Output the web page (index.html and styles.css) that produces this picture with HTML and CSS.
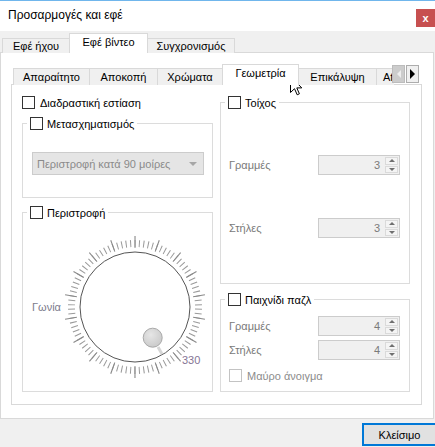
FILE: index.html
```html
<!DOCTYPE html>
<html>
<head>
<meta charset="utf-8">
<link rel="stylesheet" href="styles.css">
</head>
<body>
<div class="window">
  <div class="titlebar">
    <span class="title">Προσαρμογές και εφέ</span>
    <span class="close">x</span>
  </div>
  <div class="client">
    <div class="otabs">
      <div class="otab t1">Εφέ ήχου</div>
      <div class="otab t2 sel">Εφέ βίντεο</div>
      <div class="otab t3">Συγχρονισμός</div>
    </div>
    <div class="opane">
      <div class="itabs">
        <div class="itab w1">Απαραίτητο</div>
        <div class="itab w2">Αποκοπή</div>
        <div class="itab w3">Χρώματα</div>
        <div class="itab w4 sel">Γεωμετρία</div>
        <div class="itab w5">Επικάλυψη</div>
        <div class="itab w6">AtmoLight</div>
      </div>
      <div class="scrollbtns">
        <span class="sb sb-left"><span class="tri-l"></span></span>
        <span class="sb sb-right"><span class="tri-r"></span></span>
      </div>
      <div class="ipane">
        <div class="col lcol">
          <div class="crow"><span class="box"></span><span>Διαδραστική εστίαση</span></div>
          <fieldset class="group g-transform">
            <legend><span class="box"></span><span>Μετασχηματισμός</span></legend>
            <div class="combo"><span>Περιστροφή κατά 90 μοίρες</span><span class="caret"></span></div>
          </fieldset>
          <fieldset class="group g-rotate">
            <legend><span class="box"></span><span>Περιστροφή</span></legend>
            <div class="dialrow">
              <span class="dlabel">Γωνία</span>
              <svg class="dial" width="145" height="150" viewBox="0 0 145 150">
                <circle cx="74" cy="75" r="63.5" fill="none" stroke="#9a9a9a" stroke-width="7" pathLength="360" stroke-dasharray="0.9 3.1" stroke-dashoffset="0.45" transform="rotate(2 74 75)"/>
                <circle cx="74" cy="75" r="65" fill="none" stroke="#8a8a8a" stroke-width="12" pathLength="360" stroke-dasharray="0.9 19.1" stroke-dashoffset="0.45" transform="rotate(10 74 75)"/>
                <circle cx="74" cy="75" r="55" fill="#fff" stroke="#555" stroke-width="1"/>
                <line x1="97" y1="115" x2="101" y2="122" stroke="#d6d6d6" stroke-width="3"/>
                <defs>
                  <radialGradient id="kg" cx="0.4" cy="0.35" r="0.7">
                    <stop offset="0" stop-color="#e6e6e6"/>
                    <stop offset="1" stop-color="#c9c9c9"/>
                  </radialGradient>
                </defs>
                <circle cx="91.7" cy="105.7" r="9.5" fill="url(#kg)" stroke="#a9a9a9" stroke-width="1"/>
                <text x="121" y="132" class="dval">330</text>
              </svg>
            </div>
          </fieldset>
        </div>
        <div class="col rcol">
          <fieldset class="group g-wall">
            <legend><span class="box"></span><span>Τοίχος</span></legend>
            <div class="srow r1"><span class="lbl">Γραμμές</span><div class="spin"><span class="val">3</span><span class="btns"><span class="up"><i></i></span><span class="dn"><i></i></span></span></div></div>
            <div class="srow r2"><span class="lbl">Στήλες</span><div class="spin"><span class="val">3</span><span class="btns"><span class="up"><i></i></span><span class="dn"><i></i></span></span></div></div>
          </fieldset>
          <fieldset class="group g-puzzle">
            <legend><span class="box"></span><span>Παιχνίδι παζλ</span></legend>
            <div class="srow p1"><span class="lbl">Γραμμές</span><div class="spin"><span class="val">4</span><span class="btns"><span class="up"><i></i></span><span class="dn"><i></i></span></span></div></div>
            <div class="srow p2"><span class="lbl">Στήλες</span><div class="spin"><span class="val">4</span><span class="btns"><span class="up"><i></i></span><span class="dn"><i></i></span></span></div></div>
            <div class="crow dis"><span class="box"></span><span>Μαύρο άνοιγμα</span></div>
          </fieldset>
        </div>
      </div>
    </div>
    <div class="footer"><span class="btn">Κλείσιμο</span></div>
  </div>
</div>
<svg class="cursor" width="13" height="20" viewBox="0 0 13 20"><path d="M0.5 0.5 V16.5 L4.5 12.7 L7.2 18.8 L9.4 17.8 L6.8 11.9 H11.8 Z" fill="#fff" stroke="#000" stroke-width="1" stroke-linejoin="miter"/></svg>
</body>
</html>
```

FILE: styles.css
```css
* { box-sizing: border-box; }
html, body { margin: 0; padding: 0; }
body {
  width: 435px; height: 447px; overflow: hidden; position: relative;
  background: #f0f0f0;
  font-family: "Liberation Sans", Arial, sans-serif;
  font-size: 11px; color: #000;
}
.window { height: 447px; border-top: 1px solid #70b6ec; display: flex; flex-direction: column; }
.titlebar { height: 30px; background: #fff; display: flex; justify-content: space-between; align-items: flex-start; flex-shrink: 0; }
.title { padding-left: 8px; line-height: 28px; font-size: 12px; }
.close { margin-top: 8px; width: 19px; height: 18px; background: #c75050; color: #fff; font-weight: bold; font-size: 11px; display: flex; align-items: center; justify-content: center; line-height: 1; }

.client { flex: 1; padding-top: 2px; }
.otabs { display: flex; align-items: flex-end; height: 20px; margin-left: 2px; margin-bottom: -1px; position: relative; z-index: 2; }
.otab { height: 15px; border: 1px solid #d9d9d9; border-bottom: none; background: #f0f0f0; display: flex; align-items: center; justify-content: center; line-height: 1; }
.otab + .otab { margin-left: -1px; }
.otab.t1 { width: 68px; }
.otab.t2 { width: 79px; }
.otab.t3 { width: 88px; }
.otab.sel { height: 20px; background: #fff; position: relative; z-index: 1; padding-bottom: 2px; }

.opane { position: relative; width: 434px; height: 367px; border: 1px solid #d9d9d9; background: #fff; padding: 11px 0 0 10px; }
.itabs { display: flex; align-items: flex-end; height: 21px; width: 381px; margin-left: 2px; margin-bottom: -1px; overflow: hidden; position: relative; z-index: 2; }
.itab { flex-shrink: 0; height: 17px; border: 1px solid #d9d9d9; border-bottom: none; background: #f0f0f0; display: flex; align-items: center; justify-content: center; line-height: 1; }
.itab + .itab { margin-left: -1px; }
.itab.w1 { width: 77px; }
.itab.w2 { width: 69px; }
.itab.w3 { width: 66px; }
.itab.w4 { width: 77px; }
.itab.w5 { width: 79px; }
.itab.w6 { width: 80px; justify-content: flex-start; padding-left: 6px; }
.itab.sel { height: 21px; background: #fff; position: relative; z-index: 1; padding-bottom: 3px; }

.scrollbtns { position: absolute; left: 391px; top: 12px; display: flex; z-index: 3; }
.sb { width: 13px; height: 18px; border: 1px solid #bcbcbc; display: flex; align-items: center; justify-content: center; }
.sb-left { background: #cccccc; }
.sb-right { background: #f0f0f0; border-color: #adadad; margin-left: 1px; }
.tri-l { width: 0; height: 0; border-top: 4px solid transparent; border-bottom: 4px solid transparent; border-right: 4px solid #eeeeee; }
.tri-r { width: 0; height: 0; border-top: 5px solid transparent; border-bottom: 5px solid transparent; border-left: 5px solid #000; }

.ipane { width: 411px; height: 321px; border: 1px solid #d9d9d9; background: #fff; display: flex; gap: 7px; padding: 10px 0 0 10px; }
.col { display: flex; flex-direction: column; }
.lcol { width: 191px; }
.rcol { width: 190px; }

.box { width: 13px; height: 13px; border: 1px solid #333; background: #fff; flex-shrink: 0; }
.crow { display: flex; align-items: center; gap: 5px; height: 15px; }
.crow.dis { color: #8c8c8c; padding-left: 4px; margin-top: 8px; margin-bottom: 8px; }
.crow.dis .box { border-color: #c3c3c3; }

.group { margin: 0; padding: 0 9px 0 4px; border: 1px solid #dcdcdc; min-width: 0; }
.group legend { padding: 0 3px; display: flex; align-items: center; gap: 4px; height: 15px; }
.g-transform { margin-top: 6px; }
.g-rotate { margin-top: 7px; }
.g-puzzle { margin-top: 8px; }

.combo { margin: 21px 0 22px 5px; width: 172px; height: 23px; border: 1px solid #cccccc; background: #e5e5e5; color: #8a8a8a; display: flex; align-items: center; justify-content: space-between; padding: 0 6px 0 4px; white-space: nowrap; }
.caret { width: 0; height: 0; border-left: 4px solid transparent; border-right: 4px solid transparent; border-top: 4px solid #a6a6a6; }

.dialrow { display: flex; align-items: center; margin: 12px 0 9px 5px; }
.dlabel { width: 29px; flex-shrink: 0; color: #7c7b8c; }
.dial { flex-shrink: 0; display: block; }
.dval { font-family: "Liberation Sans", Arial, sans-serif; font-size: 11px; fill: #857494; }

.srow { display: flex; align-items: center; justify-content: space-between; height: 20px; padding-left: 4px; }
.lbl { color: #7a7a7a; }
.g-wall .r1 { margin-top: 45px; }
.g-wall .r2 { margin-top: 43px; margin-bottom: 45px; }
.g-puzzle .p1 { margin-top: 9px; }
.g-puzzle .p2 { margin-top: 4px; }
.spin { width: 82px; height: 20px; border: 1px solid #cccccc; background: #f0f0f0; display: flex; align-items: center; justify-content: flex-end; color: #7a7a7a; }
.val { padding-right: 5px; }
.btns { width: 13px; height: 16px; margin-right: 1px; display: flex; flex-direction: column; gap: 1px; }
.btns .up, .btns .dn { flex: 1; border: 1px solid #dadada; background: #f4f4f4; display: flex; align-items: center; justify-content: center; }
.btns .up i { width: 0; height: 0; border-left: 3px solid transparent; border-right: 3px solid transparent; border-bottom: 3px solid #6f6f6f; }
.btns .dn i { width: 0; height: 0; border-left: 3px solid transparent; border-right: 3px solid transparent; border-top: 3px solid #6f6f6f; }

.footer { display: flex; justify-content: flex-end; margin-top: 4px; margin-right: -2px; }
.btn { width: 75px; height: 23px; border: 2px solid #0078d7; background: #e1e1e1; display: flex; align-items: center; justify-content: center; }

.cursor { position: absolute; left: 290px; top: 76px; }
```
